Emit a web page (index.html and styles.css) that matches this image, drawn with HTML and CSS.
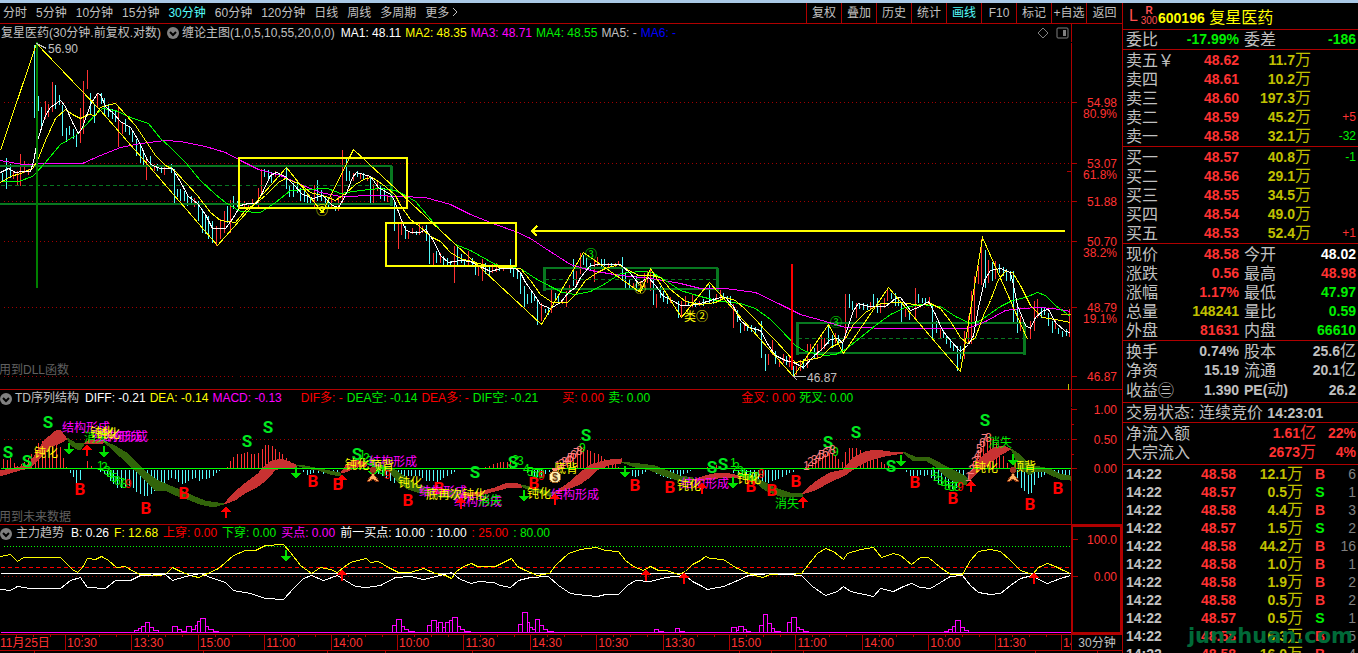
FILE: index.html
```html
<!DOCTYPE html>
<html lang="zh-CN">
<head>
    <meta charset="UTF-8">
    <meta name="viewport" content="width=device-width, initial-scale=1.0">
    <title>复星医药 600196</title>
    <link rel="stylesheet" href="styles.css">
</head>
<body>
    <div class="app">
        <main class="charts">
            <header class="toolbar">
                <nav class="periods">
                    <a href="#">分时</a>
                    <a href="#">5分钟</a>
                    <a href="#">10分钟</a>
                    <a href="#">15分钟</a>
                    <a href="#" class="active">30分钟</a>
                    <a href="#">60分钟</a>
                    <a href="#">120分钟</a>
                    <a href="#">日线</a>
                    <a href="#">周线</a>
                    <a href="#">多周期</a>
                    <a href="#">更多<svg class="more" viewBox="0 0 8 10"><path d="M2 1L6 5L2 9"/></svg></a>
                </nav>
                <div class="tools">
                    <button type="button">复权</button>
                    <button type="button">叠加</button>
                    <button type="button">历史</button>
                    <button type="button">统计</button>
                    <button type="button" class="active">画线</button>
                    <button type="button">F10</button>
                    <button type="button">标记</button>
                    <button type="button">+自选</button>
                    <button type="button">返回</button>
                </div>
            </header>

            <!-- K line -->
            <section class="pane">
                <div class="legend legend-main">
                    <span>复星医药(30分钟.前复权.对数)</span>
                    <svg class="fold" viewBox="0 0 12 12"><circle cx="6" cy="6" r="6"/><path d="M3 5L6 8L9 5"/></svg>
                    <span class="name">缠论主图(1,0,5,10,55,20,0,0)</span>
                    <span class="white">MA1: 48.11</span>
                    <span class="yellow">MA2: 48.35</span>
                    <span class="magenta">MA3: 48.71</span>
                    <span class="green">MA4: 48.55</span>
                    <span>MA5: -</span>
                    <span class="blue">MA6: -</span>
                    <svg class="pane-icons" viewBox="0 0 32 12"><path d="M6 1L11 6L6 11L1 6Z"/><rect x="20" y="1" width="11" height="10" rx="1"/><path class="fill" d="M26 3h3v6h-3z"/></svg>
                </div>
                <svg class="plot" viewBox="0 42 1122 347">
                    <path class="grid" d="M3 102H1071M3 163H1071M3 201H1071M3 241H1071M3 307H1071M3 376H1071"/>

                    <path class="bar up" d="M13 170V178M17 170V184M20 153V185M24 160V172M28 168V174M45 100V118M48 103V116M52 81V111M80 107V142M83 80V133M87 69V88M97 92V107M118 107V146M122 122V133M146 158V179M154 163V170M164 164V174M194 197V206M216 225V245M220 218V238M224 210V232M230 199V232M244 200V208M248 202V208M252 198V206M258 187V206M261 168V195M275 170V176M314 184V206M331 196V208M338 195V210M342 149V203M353 172V180M360 173V178M367 174V180M373 183V203M377 180V190M387 195V201M398 221V248M401 220V234M408 231V238M412 227V233M419 221V234M422 225V232M433 252V264M440 252V262M454 245V282M468 250V265M478 265V275M482 258V280M492 263V272M496 262V271M503 265V270M541 302V320M551 289V312M562 298V303M566 290V306M569 284V293M576 270V284M580 252V273M594 258V281M597 256V265M608 262V267M615 262V266M618 260V264M633 282V288M640 280V290M644 272V287M647 270V282M650 266V290M656 293V307M670 296V302M681 300V317M685 295V305M692 293V306M699 300V305M716 293V300M720 289V300M733 303V327M744 323V330M768 353V364M772 339V354M779 358V366M783 353V362M789 356V366M796 365V374M800 359V370M807 343V367M810 343V352M817 343V358M821 335V350M824 337V348M835 332V342M845 293V338M856 302V317M870 301V308M880 303V312M884 297V307M887 288V300M905 308V316M915 287V317M929 296V304M940 327V337M964 330V358M968 315V342M971 290V343M974 275V320M978 265V283M981 238V284M988 259V282M995 260V278M1020 315V330M1030 320V338M1034 300V330M1037 298V317M1055 318V328M1069 308V336"/>
                    <path class="bar down" d="M2 172V181M6 157V188M10 163V177M34 44V117M38 95V110M41 106V126M55 84V108M59 94V104M62 104V135M66 127V141M69 125V134M73 128V138M76 133V146M90 92V113M94 104V122M101 92V103M104 97V114M108 103V116M112 108V118M115 110V121M125 118V131M129 125V134M132 130V141M136 138V155M140 144V162M143 150V165M150 155V165M157 163V170M161 165V172M171 163V172M174 168V203M177 188V196M180 188V200M184 190V200M187 193V205M191 195V203M198 200V220M202 208V232M205 214V233M208 215V238M212 220V242M227 205V222M233 195V208M237 200V206M264 168V176M268 169V178M271 171V182M279 172V176M286 167V188M289 184V196M293 182V196M297 180V192M300 187V200M304 189V201M307 193V203M310 196V204M317 179V200M321 189V200M325 195V206M328 196V207M335 205V210M346 158V180M349 170V180M357 170V176M363 172V178M370 176V203M380 185V198M384 187V200M394 200V230M405 225V238M416 230V234M426 224V240M429 235V263M436 250V262M443 255V264M447 257V264M450 260V266M457 246V265M461 253V262M464 258V266M472 257V266M475 262V274M485 262V273M489 265V274M499 264V270M510 258V272M513 266V276M517 270V278M520 272V293M524 285V306M527 293V303M531 291V302M534 294V300M537 300V324M545 308V312M548 306V314M555 292V300M558 294V301M573 258V285M583 254V264M586 257V268M590 262V270M601 258V266M604 258V265M611 262V267M622 256V280M625 272V288M629 278V288M636 275V290M653 272V304M660 285V297M663 290V301M667 294V303M678 300V317M688 300V305M695 301V306M703 298V305M709 284V302M713 297V303M723 292V298M727 295V300M730 295V304M737 309V321M740 322V332M747 323V330M751 324V331M755 326V332M761 320V357M765 353V370M775 350V363M786 355V364M793 365V375M803 358V368M814 347V358M828 325V343M832 334V347M838 334V342M842 342V350M849 293V307M852 300V309M859 302V308M863 302V309M867 303V309M873 293V306M877 297V312M891 292V298M895 292V305M898 298V305M901 302V322M909 311V319M918 293V302M922 297V302M925 297V303M932 304V338M936 320V332M943 329V337M946 334V343M950 338V347M953 344V350M957 345V370M960 345V358M985 249V287M992 261V280M999 263V272M1003 266V275M1006 268V280M1010 270V280M1013 270V321M1017 305V332M1024 325V335M1041 307V317M1044 306V314M1048 312V325M1052 320V332M1058 327V333M1062 330V336M1066 328V335"/>

                    <path class="zone" d="M0 166H391V204H0M544 268H717V289H544ZM797 323H1024V353H797Z"/>
                    <path class="zone-mid" d="M0 185H391M544 279H717M797 338H1024"/>
                    <path class="zone-side" d="M391 165V205M544 267V290M717 267V290M797 322V354M1024 322V354"/>

                    <polyline class="line magenta-line" points="0,160 22,164 50,163 82,163 100,155 120,147 140,143 165,140 180,141 205,146 225,152 240,160 258,169 280,175 300,184 320,192 340,196 375,195 425,197 450,204 470,214 495,224 515,231 530,238 545,248 570,264 590,270 620,275 650,278 680,283 700,288 725,288 755,292 780,304 800,314 825,321 845,327 900,328 967,328 985,321 1005,310 1020,308 1040,307 1060,309 1070,311"/>
                    <polyline class="line green-line" points="0,181 18,181 32,176 45,162 60,144 75,135 85,125 95,114 102,108 115,110 130,117 148,123 160,138 170,147 185,162 200,180 215,194 225,202 240,211 260,212 275,202 290,190 305,189 327,188 340,193 360,190 380,188 395,190 405,195 415,201 427,215 440,230 455,244 470,250 495,264 510,267 520,268 535,278 550,286 562,292 575,294 590,291 605,283 620,273 640,271 652,272 665,280 680,290 700,296 720,301 740,303 755,308 770,319 780,329 795,345 805,351 825,355 835,354 845,349 860,337 875,325 890,314 905,307 920,304 940,306 955,316 970,323 980,320 1000,306 1012,300 1025,297 1037,292 1045,295 1055,305 1070,316"/>
                    <polyline class="line yellow-line" points="0,182 10,176 20,173 32,168 37,160 45,140 55,118 65,109 72,114 80,118 88,114 95,115 100,107 110,104 115,103 125,114 135,125 145,140 155,155 165,165 173,169 185,182 197,195 210,212 220,220 235,222 245,210 255,203 265,195 278,182 285,178 300,184 310,192 325,196 335,200 345,193 355,184 365,178 372,177 385,186 395,195 400,205 410,219 418,225 430,236 440,241 450,252 460,258 475,262 490,266 505,267 520,268 530,280 540,294 552,302 567,302 575,294 585,280 597,272 605,268 618,264 625,268 638,275 650,275 660,277 670,289 685,301 700,304 715,302 725,297 735,300 745,309 755,319 765,330 775,340 785,351 795,362 810,359 820,357 830,347 838,343 845,338 853,324 865,312 880,303 900,302 920,305 930,303 940,308 950,321 960,337 967,343 975,337 983,315 990,300 998,279 1005,271 1012,272 1020,285 1030,305 1042,317 1055,319 1070,322"/>
                    <polyline class="line white-line" points="0,172 8,168 15,172 22,171 30,171 33,161 37,140 45,115 50,107 60,100 65,106 72,122 78,133 82,127 90,104 97,93 100,94 105,106 113,113 120,121 130,127 138,140 147,160 152,165 160,168 172,168 178,178 188,196 197,203 205,214 212,228 225,228 233,217 240,205 248,203 256,203 262,192 270,175 276,172 285,176 293,184 302,194 313,198 322,195 332,205 338,207 345,195 352,177 356,172 370,176 378,187 390,194 394,200 400,217 405,229 410,232 420,232 425,229 433,240 440,255 448,262 460,260 470,261 480,266 490,271 500,268 515,268 520,272 525,282 533,293 540,304 550,308 560,302 568,292 575,287 580,277 590,265 600,264 620,264 630,273 638,283 648,277 655,285 663,296 672,300 680,305 690,305 700,303 710,300 720,297 725,297 733,306 740,320 748,327 760,330 768,345 775,355 785,360 793,362 803,367 812,357 822,348 830,339 838,338 842,343 848,325 853,310 858,303 868,306 885,306 895,298 900,297 910,310 920,306 928,301 935,314 942,330 950,340 960,351 968,344 973,335 978,307 984,280 990,270 1000,268 1010,272 1013,285 1017,305 1025,325 1030,328 1035,317 1043,310 1048,309 1055,322 1065,331 1070,332"/>
                    <polyline class="line yellow-line" points="0,150 36,43 100,110 148,165 217,245 286,167 322,212 353,149 541,324 583,252 640,292 650,268 681,317 709,282 793,376 828,324 843,353 888,287 960,371 982,237 1027,339"/>

                    <!-- drawn by hand on the chart -->
                    <path class="mark-green" d="M37 42V288"/>
                    <path class="mark-red" d="M792 264V370"/>
                    <path class="mark-yellow" d="M239 158H407V208H239ZM386 223H516V266H386ZM531 231H1065M537 226L532 231L537 236"/>
                    <path class="grey-line" d="M36 43L46 48M793 376H805M793 376L797 380"/>
                    <path class="tick-yellow" d="M1060 314H1070M1068 383V389"/>

                    <text class="grey" x="48" y="53">56.90</text>
                    <text class="grey" x="807" y="382">46.87</text>
                    <text class="dim" x="-1" y="374">用到DLL函数</text>
                    <text class="yellow" x="316" y="215">②</text>
                    <text class="green" x="585" y="259">③</text>
                    <text class="yellow" x="634" y="293">②</text>
                    <text class="yellow" x="684" y="321">类②</text>
                    <text class="green" x="830" y="327">③</text>

                    <path class="axis" d="M1071 42V389M1071 102H1076M1071 163H1076M1071 201H1076M1071 241H1076M1071 307H1076M1071 376H1076M1066 171H1071"/>
                    <g class="scale">
                        <text x="1117" y="107">54.98</text>
                        <text x="1117" y="118">80.9%</text>
                        <text x="1117" y="168">53.07</text>
                        <text x="1117" y="179">61.8%</text>
                        <text x="1117" y="206">51.88</text>
                        <text x="1117" y="246">50.70</text>
                        <text x="1117" y="257">38.2%</text>
                        <text x="1117" y="312">48.79</text>
                        <text x="1117" y="323">19.1%</text>
                        <text x="1117" y="381">46.87</text>
                    </g>
                </svg>
            </section>

            <!-- TD -->
            <section class="pane">
                <div class="legend legend-td">
                    <svg class="fold" viewBox="0 0 12 12"><circle cx="6" cy="6" r="6"/><path d="M3 5L6 8L9 5"/></svg>
                    <span class="name">TD序列结构</span>
                    <span class="white">DIFF: -0.21</span>
                    <span class="yellow">DEA: -0.14</span>
                    <span class="magenta">MACD: -0.13</span>
                    <span class="red gap-s">DIF多: -</span>
                    <span class="green">DEA空: -0.14</span>
                    <span class="red">DEA多: -</span>
                    <span class="green">DIF空: -0.21</span>
                    <span class="red gap-m">买: 0.00</span>
                    <span class="green">卖: 0.00</span>
                    <span class="red gap-l">金叉: 0.00</span>
                    <span class="green">死叉: 0.00</span>
                </div>
                <svg class="plot" viewBox="0 407 1122 117">
                    <defs>
                        <path id="arrow-up" d="M0 0L5 6H1V12H-1V6H-5Z"/>
                        <path id="arrow-down" d="M0 12L5 6H1V0H-1V6H-5Z"/>
                        <g id="star">
                            <circle cx="0" cy="-4" r="3" fill="#a03020"/>
                            <path fill="#ffb060" stroke="#803010" d="M0 -2L2 2L6 7L4 8L0 5L-4 8L-6 7L-2 2Z"/>
                        </g>
                    </defs>
                    <path class="grid" d="M3 439H1071"/>
                    <path class="bar up" d="M3 468V458M7 468V459M10 468V457M14 468V462M17 468V465M21 468V463M24 468V461M28 468V457M31 468V453M35 468V448M38 468V442M42 468V440M45 468V438M49 468V436M52 468V436M56 468V440M60 468V446M63 468V457M66 468V466M87 468V460M91 468V465M227 468V466M230 468V460M233 468V456M237 468V453M241 468V453M244 468V452M247 468V451M251 468V453M254 468V453M258 468V452M262 468V448M265 468V444M268 468V444M272 468V445M275 468V448M279 468V451M282 468V453M286 468V457M289 468V460M293 468V463M296 468V467M345 468V464M349 468V462M353 468V461M357 468V463M361 468V465M472 468V467M475 468V466M482 468V467M485 468V466M489 468V465M493 468V463M497 468V462M500 468V461M503 468V461M507 468V461M510 468V460M553 468V467M557 468V465M560 468V462M563 468V458M567 468V456M570 468V454M573 468V452M577 468V450M580 468V448M583 468V448M587 468V449M590 468V450M594 468V452M598 468V453M601 468V455M604 468V458M608 468V460M612 468V462M615 468V463M618 468V466M703 468V467M707 468V466M712 468V465M716 468V464M805 468V466M808 468V464M812 468V462M815 468V460M818 468V458M822 468V455M825 468V453M829 468V452M832 468V452M835 468V454M838 468V458M842 468V461M845 468V451M849 468V447M852 468V447M856 468V447M860 468V449M863 468V451M867 468V453M870 468V455M873 468V457M877 468V458M881 468V461M884 468V463M888 468V465M970 468V465M973 468V460M977 468V453M980 468V447M983 468V441M987 468V437M990 468V437M993 468V438M996 468V442M999 468V447M1003 468V455M1007 468V462"/>
                    <path class="bar down" d="M70 469V472M73 469V476M76 469V482M80 469V479M100 469V471M104 469V473M107 469V475M110 469V480M113 469V483M117 469V487M121 469V487M125 469V486M129 469V485M133 469V487M136 469V491M140 469V493M144 469V495M147 469V495M151 469V493M154 469V490M157 469V487M161 469V485M164 469V482M168 469V479M171 469V477M175 469V478M178 469V481M182 469V483M185 469V482M188 469V480M192 469V478M195 469V477M199 469V480M202 469V478M206 469V478M209 469V477M213 469V475M216 469V472M219 469V470M303 469V471M307 469V474M310 469V473M313 469V472M318 469V472M323 469V473M328 469V472M333 469V472M337 469V472M378 469V473M382 469V475M386 469V477M390 469V480M394 469V482M398 469V480M401 469V478M404 469V477M408 469V475M411 469V475M415 469V475M419 469V475M422 469V477M426 469V480M429 469V480M433 469V480M437 469V481M440 469V479M443 469V477M447 469V475M451 469V473M454 469V471M527 469V472M531 469V475M534 469V476M537 469V476M541 469V476M545 469V473M549 469V471M625 469V471M632 469V475M635 469V476M638 469V475M642 469V473M645 469V471M652 469V471M656 469V473M660 469V475M663 469V476M667 469V477M670 469V478M673 469V478M677 469V477M680 469V475M683 469V473M687 469V472M690 469V470M733 469V472M738 469V474M742 469V476M746 469V477M750 469V477M754 469V478M758 469V479M762 469V481M765 469V482M768 469V482M772 469V480M775 469V479M778 469V478M782 469V476M786 469V474M789 469V472M793 469V471M906 469V471M910 469V475M913 469V476M917 469V475M920 469V474M924 469V475M927 469V474M931 469V477M934 469V480M938 469V482M941 469V483M945 469V485M948 469V487M952 469V488M956 469V487M959 469V483M963 469V480M1013 469V475M1017 469V480M1021 469V487M1024 469V490M1028 469V493M1031 469V492M1034 469V484M1038 469V477M1041 469V476M1044 469V474M1048 469V473M1051 469V472M1054 469V473M1058 469V475M1062 469V476M1065 469V475M1069 469V475"/>
                    <path class="ribbon-up" d="M0 471L20 467L30 464L35 455L45 440L57 430L60 430L67 439L60 443L50 447L40 458L30 468L20 470L0 476ZM84 444L88 441L104 440L103 443L95 443ZM224 504L235 492L247 482L258 474L265 466L272 461L282 459L296 465L296 467L285 467L275 470L266 480L257 487L245 493L235 500ZM341 473L348 463L356 460L366 463L366 466L356 467L348 471ZM461 494L480 492L495 488L505 484L515 483L521 485L521 487L510 487L495 491L480 495L461 497ZM556 492L570 482L580 473L590 465L600 462L610 460L621 459L621 463L608 465L597 470L590 477L580 484L570 488L556 493ZM693 480L705 476L718 473L730 474L740 476L740 478L725 477L705 480ZM802 494L815 482L830 473L843 470L853 458L865 452L875 450L890 452L903 452L903 453L885 456L870 460L858 466L845 475L830 482L815 490ZM968 478L975 465L983 456L993 448L1003 446L1011 449L1000 455L990 463L980 470L970 480Z"/>
                    <path class="ribbon-down" d="M67 438L75 443L84 444L80 450L77 449L71 445ZM103 441L115 446L128 454L137 463L147 473L157 480L170 486L180 490L195 497L205 501L224 504L213 507L200 504L185 498L175 495L167 491L155 490L147 482L138 473L125 461L110 447ZM296 465L305 466L315 468L325 470L340 473L340 476L330 474L318 470L305 468ZM366 463L385 466L395 470L405 477L415 484L425 487L440 490L460 491L460 497L440 497L420 493L408 489L398 482L390 472ZM521 485L535 488L550 492L556 493L550 496L540 493L525 488ZM621 462L630 463L640 464L655 466L668 471L680 476L693 478L693 481L680 481L665 476L650 470L635 467ZM738 475L750 476L760 480L775 488L790 493L802 494L802 496L780 496L765 490L755 482ZM903 452L915 457L930 458L945 466L955 471L965 476L968 479L966 485L955 482L945 476L935 466L925 460L912 460ZM1011 449L1020 455L1028 463L1035 466L1050 469L1060 474L1070 476L1070 480L1060 479L1045 472L1035 471L1030 475L1020 468Z"/>
                    <path class="line green-line" d="M0 468H1071"/>

                    <g class="sell">
                        <text x="8" y="458">S</text><text x="27" y="467">S</text><text x="48" y="428">S</text>
                        <text x="247" y="447">S</text><text x="268" y="433">S</text><text x="357" y="460">S</text>
                        <text x="475" y="478">S</text><text x="513" y="468">S</text><text x="586" y="441">S</text>
                        <text x="712" y="473">S</text><text x="723" y="470">S</text><text x="828" y="448">S</text>
                        <text x="856" y="438">S</text><text x="891" y="472">S</text><text x="985" y="426">S</text>
                    </g>
                    <g class="buy">
                        <text x="80" y="495">B</text><text x="146" y="514">B</text><text x="184" y="499">B</text>
                        <text x="313" y="487">B</text><text x="338" y="490">B</text><text x="408" y="506">B</text>
                        <text x="439" y="494">B</text><text x="534" y="489">B</text><text x="635" y="491">B</text>
                        <text x="670" y="493">B</text><text x="751" y="492">B</text><text x="772" y="496">B</text>
                        <text x="796" y="487">B</text><text x="915" y="488">B</text><text x="953" y="504">B</text>
                        <text x="1030" y="510">B</text><text x="1058" y="494">B</text>
                    </g>

                    <!-- TD counts -->
                    <g class="green">
                        <text x="97" y="470">1</text><text x="101" y="471">2</text><text x="104" y="475">3</text><text x="107" y="479">4</text><text x="111" y="482">5</text><text x="114" y="485">6</text><text x="118" y="487">7</text><text x="121" y="488">8</text>
                        <text x="359" y="459">1</text><text x="363" y="462">2</text><text x="366" y="465">3</text><text x="370" y="468">4</text><text x="374" y="471">5</text><text x="378" y="474">6</text><text x="381" y="476">7</text>
                        <text x="512" y="464">2</text><text x="517" y="465">3</text><text x="523" y="473">4</text><text x="527" y="476">5</text><text x="531" y="477">6</text><text x="534" y="478">7</text><text x="538" y="478">8</text>
                        <text x="579" y="452">9</text>
                        <text x="730" y="467">1</text><text x="733" y="471">2</text><text x="737" y="475">3</text><text x="740" y="478">4</text><text x="744" y="480">5</text><text x="748" y="481">6</text><text x="752" y="481">7</text>
                        <text x="832" y="456">9</text>
                        <text x="930" y="476">1</text><text x="933" y="481">2</text><text x="937" y="485">3</text><text x="941" y="488">4</text><text x="944" y="490">5</text><text x="948" y="491">6</text><text x="951" y="491">7</text><text x="954" y="491">8</text>
                    </g>
                    <g class="pink">
                        <text x="554" y="470">1</text><text x="558" y="468">2</text><text x="561" y="466">3</text><text x="564" y="464">4</text><text x="567" y="462">5</text><text x="570" y="459">6</text><text x="573" y="457">7</text><text x="576" y="455">8</text>
                        <text x="803" y="470">1</text><text x="807" y="466">2</text><text x="811" y="464">3</text><text x="815" y="461">4</text><text x="818" y="459">5</text><text x="822" y="457">6</text><text x="825" y="456">7</text><text x="829" y="454">8</text>
                        <text x="965" y="481">1</text><text x="968" y="474">2</text><text x="971" y="466">3</text><text x="974" y="459">4</text><text x="976" y="453">5</text><text x="979" y="447">6</text><text x="981" y="443">7</text><text x="985" y="442">8</text>
                    </g>
                    <g class="red">
                        <text x="125" y="488">9</text><text x="384" y="479">9</text><text x="538" y="480">9</text><text x="758" y="478">9</text><text x="957" y="491">9</text>
                    </g>

                    <g class="magenta">
                        <text x="62" y="432">结构形成</text><text x="94" y="441">结构形成</text><text x="100" y="441">结构形成</text>
                        <text x="369" y="466">结构形成</text><text x="419" y="496">结构形成</text><text x="454" y="506">结构形成</text>
                        <text x="551" y="499">结构形成</text><text x="681" y="488">结构形成</text>
                    </g>
                    <g class="green">
                        <text x="84" y="442">消失</text><text x="478" y="505">消失</text><text x="775" y="508">消失</text><text x="988" y="447">消失</text>
                    </g>
                    <g class="yellow">
                        <text x="34" y="457">钝化</text><text x="90" y="437">钝化</text><text x="96" y="438">钝化</text>
                        <text x="345" y="469">钝化</text><text x="370" y="470">顶背</text><text x="398" y="487">钝化</text>
                        <text x="426" y="499">底再次钝化</text><text x="527" y="498">钝化</text><text x="554" y="473">底背</text>
                        <text x="677" y="490">钝化</text><text x="737" y="483">钝化</text><text x="974" y="472">钝化</text>
                        <text x="1012" y="471">顶背</text>
                    </g>

                    <g class="fill-red">
                        <use href="#arrow-up" x="87" y="444"/><use href="#arrow-up" x="226" y="506"/><use href="#arrow-up" x="342" y="474"/><use href="#arrow-up" x="461" y="497"/><use href="#arrow-up" x="555" y="493"/><use href="#arrow-up" x="702" y="482"/><use href="#arrow-up" x="803" y="496"/><use href="#arrow-up" x="971" y="480"/>
                    </g>
                    <g class="fill-green">
                        <use href="#arrow-down" x="69" y="443"/><use href="#arrow-down" x="104" y="446"/><use href="#arrow-down" x="296" y="467"/><use href="#arrow-down" x="373" y="465"/><use href="#arrow-down" x="524" y="490"/><use href="#arrow-down" x="625" y="466"/><use href="#arrow-down" x="733" y="477"/><use href="#arrow-down" x="901" y="455"/><use href="#arrow-down" x="1013" y="454"/>
                    </g>
                    <use href="#star" x="373" y="474"/>
                    <use href="#star" x="1013" y="474"/>
                    <path fill="#ff9070" d="M552 468h6l-1 4h-4z"/>
                    <circle cx="555" cy="477" r="6" fill="#fff0b0" stroke="#a06020"/>
                    <text class="coin" x="555" y="481">$</text>

                    <path class="axis" d="M1071 407V524M1071 409H1076M1071 439H1076M1071 468H1076M1071 424H1073M1071 454H1073"/>
                    <g class="scale">
                        <text x="1117" y="414">1.00</text>
                        <text x="1117" y="444">0.50</text>
                        <text x="1117" y="473">0.00</text>
                    </g>
                    <text class="dim" x="-1" y="521">用到未来数据</text>
                </svg>
            </section>

            <!-- 主力趋势 -->
            <section class="pane pane-trend">
                <div class="legend">
                    <svg class="fold" viewBox="0 0 12 12"><circle cx="6" cy="6" r="6"/><path d="M3 5L6 8L9 5"/></svg>
                    <span class="name">主力趋势</span>
                    <span class="white">B: 0.26</span>
                    <span class="yellow">F: 12.68</span>
                    <span class="red">上穿: 0.00</span>
                    <span class="green">下穿: 0.00</span>
                    <span class="magenta">买点: 0.00</span>
                    <span class="white">前一买点: 10.00</span>
                    <span class="white">: 10.00</span>
                    <span class="red">: 25.00</span>
                    <span class="green">: 80.00</span>
                </div>
                <svg class="plot" viewBox="0 542 1122 92">
                    <path class="level-green" d="M3 546H1070"/>
                    <path class="level-red" d="M0 567H1070"/>
                    <path class="grid" d="M3 576H1071"/>
                    <path class="line white-line" d="M0 573H1070"/>
                    <polyline class="line yellow-line" points="0,556 10,554 17,561 23,557 60,557 65,562 72,569 77,572 82,567 87,558 95,559 101,556 108,560 116,567 125,566 133,571 140,574 160,575 166,573 172,567 180,571 190,575 198,577 205,574 218,568 225,562 233,555 245,550 255,550 265,545 283,544 290,552 300,565 311,573 320,567 330,569 337,572 343,567 350,562 357,560 366,558 370,562 378,561 388,567 398,572 410,572 423,568 435,573 445,575 451,578 456,571 463,566 471,563 477,566 495,566 503,562 511,558 517,566 525,570 537,575 549,573 555,565 568,553 580,549 596,547 605,550 618,551 625,560 633,566 643,570 650,566 658,570 666,570 678,574 685,571 692,564 700,560 705,556 710,558 723,559 735,567 748,573 762,577 770,574 790,574 801,573 808,564 817,553 825,548 833,551 843,559 847,553 860,549 873,547 881,557 893,553 900,555 911,564 920,557 928,557 940,567 950,574 962,574 970,560 978,551 990,549 1000,551 1010,560 1020,570 1032,574 1038,567 1047,563 1055,566 1063,570 1070,573"/>
                    <polyline class="line white-line" points="0,589 10,590 17,586 30,588 60,588 70,580 80,577 87,587 105,588 115,580 130,580 140,575 165,574 172,580 185,576 200,573 210,577 225,582 233,590 250,593 265,598 283,599 293,588 303,578 311,575 323,580 337,575 345,580 355,586 366,587 380,585 395,577 410,576 423,579 440,575 451,572 460,579 471,583 478,581 493,582 500,585 510,587 518,580 530,577 548,576 558,585 570,593 585,595 597,596 605,594 618,594 627,585 635,580 650,581 665,577 685,575 692,581 700,585 707,589 723,586 735,581 748,575 770,573 801,575 812,586 825,595 837,591 843,586 850,591 873,596 880,588 893,591 903,586 911,583 920,587 930,588 940,582 950,576 962,575 970,585 978,592 990,594 1000,593 1010,585 1020,578 1032,575 1040,580 1047,583 1060,578 1070,575"/>
                    <path class="line magenta-line" d="M0 632H1071M134 632V630H138V628H141V626H145V622H149V627H153V630H158V631M141 632V626M145 632V622M149 632V627M172 632V626H177V629H181V631H186V626H191V629H195V625H197V621H200V618H205V626H208V629H213V631H218M177 632V626M191 632V626M197 632V621M200 632V618M205 632V618M392 632V625H396V619H401V626H404V629H408V631H414M396 632V619M401 632V619M427 632V625H431V620H436V627H438V622H442V627H445V622H449V620H452V617H457V626H460V629H464V631H470M431 632V620M436 632V620M438 632V622M442 632V622M445 632V622M449 632V620M452 632V617M457 632V617M518 632V624H522V612H527V622H529V627H532V629H535V619H539V625H543V629H547V631H553M522 632V612M527 632V612M529 632V622M535 632V619M539 632V619M654 632V629H658V631H663M675 632V628H679V631H684M731 632V627H736V630H738V626H743V629H746V631H750M736 632V627M743 632V626M759 632V625H763V614H767V623H771V628H774V631H780M763 632V614M767 632V614M771 632V623M787 632V622H791V617H796V627H799V629H803V631H808M791 632V617M796 632V617M944 632V631H948V629H952V626H955V620H960V627H964V630H968V631M952 632V626M955 632V620M960 632V620"/>
                    <g class="fill-red">
                        <use href="#arrow-up" x="342" y="569"/><use href="#arrow-up" x="646" y="569"/><use href="#arrow-up" x="684" y="572"/><use href="#arrow-up" x="1034" y="572"/>
                    </g>
                    <g class="fill-green"><use href="#arrow-down" x="286" y="550"/></g>
                    <path class="axis-bold" d="M1072 634V526H1121V633H1072"/>
                    <path class="axis" d="M1072 539H1077M1072 576H1077"/>
                    <g class="scale">
                        <text x="1117" y="544">100.0</text>
                        <text x="1117" y="581">0.00</text>
                    </g>
                </svg>
            </section>

            <footer class="time-axis">
                <ol class="times">
                    <li class="first">11月25日</li>
                    <li>10:30</li>
                    <li>13:30</li>
                    <li>15:00</li>
                    <li>11:00</li>
                    <li>14:00</li>
                    <li>10:00</li>
                    <li>11:30</li>
                    <li>14:30</li>
                    <li>10:30</li>
                    <li>13:30</li>
                    <li>15:00</li>
                    <li>11:00</li>
                    <li>14:00</li>
                    <li>10:00</li>
                    <li>11:30</li>
                    <li class="last">14:30</li>
                </ol>
                <span class="period">30分钟</span>
            </footer>
            <svg class="ruler" viewBox="0 0 1122 2"><path d="M34 0V2M203 0V2M327 0V2M385 0V2M472 0V2M739 0V2M771 0V2M803 0V2M1035 0V2M1097 0V2"/></svg>
        </main>

        <aside class="quote">
            <header class="stock">
                <span class="tag-l">L</span>
                <span class="tag-r"><b>R</b>300</span>
                <h1><b>600196</b> 复星医药</h1>
            </header>

            <table class="info single">
                <tr><th>委比</th><td class="green">-17.99%</td><th>委差</th><td class="green">-186</td></tr>
            </table>

            <table class="book">
                <tr><th>卖五￥</th><td>48.62</td><td class="vol">11.7<i>万</i></td><td class="diff"></td></tr>
                <tr><th>卖四</th><td>48.61</td><td class="vol">10.2<i>万</i></td><td class="diff"></td></tr>
                <tr><th>卖三</th><td>48.60</td><td class="vol">197.3<i>万</i></td><td class="diff"></td></tr>
                <tr><th>卖二</th><td>48.59</td><td class="vol">45.2<i>万</i></td><td class="diff">+5</td></tr>
                <tr><th>卖一</th><td>48.58</td><td class="vol">32.1<i>万</i></td><td class="diff green">-32</td></tr>
            </table>
            <table class="book">
                <tr><th>买一</th><td>48.57</td><td class="vol">40.8<i>万</i></td><td class="diff green">-1</td></tr>
                <tr><th>买二</th><td>48.56</td><td class="vol">29.1<i>万</i></td><td class="diff"></td></tr>
                <tr><th>买三</th><td>48.55</td><td class="vol">34.5<i>万</i></td><td class="diff"></td></tr>
                <tr><th>买四</th><td>48.54</td><td class="vol">49.0<i>万</i></td><td class="diff"></td></tr>
                <tr><th>买五</th><td>48.53</td><td class="vol">52.4<i>万</i></td><td class="diff">+1</td></tr>
            </table>

            <table class="info">
                <tr><th>现价</th><td>48.58</td><th>今开</th><td class="white">48.02</td></tr>
                <tr><th>涨跌</th><td>0.56</td><th>最高</th><td>48.98</td></tr>
                <tr><th>涨幅</th><td>1.17%</td><th>最低</th><td class="green">47.97</td></tr>
                <tr><th>总量</th><td class="vol">148241</td><th>量比</th><td class="green">0.59</td></tr>
                <tr><th>外盘</th><td>81631</td><th>内盘</th><td class="green">66610</td></tr>
            </table>
            <table class="info basics">
                <tr><th>换手</th><td>0.74%</td><th>股本</th><td>25.6<i>亿</i></td></tr>
                <tr><th>净资</th><td>15.19</td><th>流通</th><td>20.1<i>亿</i></td></tr>
                <tr><th>收益㊂</th><td>1.390</td><th><b>PE(</b>动<b>)</b></th><td>26.2</td></tr>
            </table>

            <p class="status">交易状态: 连续竞价 <b>14:23:01</b></p>

            <table class="flow">
                <tr><th>净流入额</th><td>1.61<i>亿</i></td><td>22%</td></tr>
                <tr><th>大宗流入</th><td>2673<i>万</i></td><td>4%</td></tr>
            </table>

            <table class="deals">
                <tr><th>14:22</th><td>48.58</td><td class="vol">12.1<i>万</i></td><td class="side">B</td><td class="count">6</td></tr>
                <tr><th>14:22</th><td>48.57</td><td class="vol">0.5<i>万</i></td><td class="side green">S</td><td class="count">1</td></tr>
                <tr><th>14:22</th><td>48.58</td><td class="vol">4.4<i>万</i></td><td class="side">B</td><td class="count">3</td></tr>
                <tr><th>14:22</th><td>48.57</td><td class="vol">1.5<i>万</i></td><td class="side green">S</td><td class="count">2</td></tr>
                <tr><th>14:22</th><td>48.58</td><td class="vol">44.2<i>万</i></td><td class="side">B</td><td class="count">16</td></tr>
                <tr><th>14:22</th><td>48.58</td><td class="vol">1.0<i>万</i></td><td class="side">B</td><td class="count">1</td></tr>
                <tr><th>14:22</th><td>48.58</td><td class="vol">1.9<i>万</i></td><td class="side">B</td><td class="count">2</td></tr>
                <tr><th>14:22</th><td>48.58</td><td class="vol">0.5<i>万</i></td><td class="side">B</td><td class="count">2</td></tr>
                <tr><th>14:22</th><td>48.57</td><td class="vol">0.5<i>万</i></td><td class="side green">S</td><td class="count">1</td></tr>
                <tr><th>14:22</th><td>48.58</td><td class="vol">6.3<i>万</i></td><td class="side">B</td><td class="count">5</td></tr>
                <tr><th>14:22</th><td>48.58</td><td class="vol">16.0<i>万</i></td><td class="side">B</td><td class="count">4</td></tr>
            </table>
        </aside>
        <div class="watermark">junzhuan.com</div>
    </div>
</body>
</html>
```
FILE: styles.css
```css
* {
    box-sizing: border-box;
}

body {
    margin: 0;
    background-color: #000;
    color: #c0c0c0;
    font-family: "Liberation Sans", "Noto Sans CJK SC", sans-serif;
    font-size: 12px;
}

.app {
    position: relative;
    display: flex;
    height: 100vh;
    overflow: hidden;
    border-top: 3px solid #a9c8e6;
}

.charts {
    flex: 1;
    min-width: 0;
}

/* Colours */
.white { color: #fff; fill: #fff; }
.yellow { color: #ff0; fill: #ff0; }
.magenta { color: #f0f; fill: #f0f; }
.green { color: #00f000; fill: #00f000; }
.red { color: #f00; fill: #f00; }
.blue { color: #00f; }
.pink { fill: #ff8080; }
.grey { fill: #c0c0c0; }
.dim { fill: #606060; }

/* Toolbar */
.toolbar {
    display: flex;
    justify-content: space-between;
    height: 21px;
    border-bottom: 1px solid #b00000;
    line-height: 20px;
}

.periods {
    display: flex;
    gap: 9px;
    padding-left: 3px;
    white-space: nowrap;
}

.periods a {
    color: #c0c0c0;
    text-decoration: none;
}

.periods .active,
.tools .active {
    color: #54fcfc;
}

.more {
    width: 8px;
    height: 10px;
    margin-left: 2px;
    fill: none;
    stroke: #c0c0c0;
}

.tools {
    display: flex;
}

.tools button {
    width: 35px;
    padding: 0;
    border: none;
    border-left: 1px solid #b00000;
    background: none;
    color: #c0c0c0;
    font: inherit;
    white-space: nowrap;
    cursor: pointer;
}

.tools button:last-child {
    width: 36px;
}

/* Panes */
.pane {
    border-bottom: 1px solid #b00000;
}

.legend {
    display: flex;
    align-items: center;
    gap: 5px;
    height: 17px;
    margin-right: 50px;
    border-right: 1px solid #b00000;
    line-height: 17px;
    white-space: nowrap;
}

.legend-main {
    height: 18px;
    padding-left: 1px;
    gap: 4px;
}

.legend-td {
    gap: 4px;
}

.legend .fold {
    margin-right: -1px;
}

.legend .name {
    margin-right: 2px;
}

.legend-main .fold {
    margin-left: 2px;
}

.gap-s {
    margin-left: 15px;
}

.gap-m {
    margin-left: 20px;
}

.gap-l {
    margin-left: 87px;
}

.fold {
    width: 12px;
    height: 12px;
    fill: #808080;
}

.fold path {
    fill: none;
    stroke: #000;
    stroke-width: 2;
}

.pane-icons {
    width: 32px;
    height: 12px;
    margin-left: auto;
    margin-right: 2px;
    fill: none;
    stroke: #808080;
}

.pane-icons .fill {
    fill: #808080;
    stroke: none;
}

.plot {
    display: block;
    width: 100%;
    overflow: visible;
    shape-rendering: crispEdges;
}

.plot path,
.plot polyline {
    stroke-width: 1;
}

.grid,
.bar,
.line,
.zone-mid,
.axis,
.level-green,
.level-red,
.zone,
.zone-side,
.axis-bold,
.grey-line,
.tick-yellow {
    fill: none;
}

/* put the thin strokes on whole pixels */
.grid,
.bar,
.line,
.zone-mid,
.zone-side,
.axis,
.level-green,
.level-red,
.grey-line,
.tick-yellow {
    transform: translate(0.5px, 0.5px);
}

.grid {
    stroke: #a00000;
    stroke-dasharray: 1 3;
}

.up { stroke: #ff3232; }
.down { stroke: #54fcfc; }
.white-line { stroke: #fff; }
.yellow-line { stroke: #ff0; }
.magenta-line { stroke: #f0f; }
.green-line { stroke: #0f0; }
.grey-line { stroke: #c0c0c0; }
.tick-yellow { stroke: #c0c000; }

.plot .zone {
    stroke: #087820;
    stroke-width: 2;
}

.plot .zone-side {
    stroke: #087820;
    stroke-width: 3;
}

.zone-mid {
    stroke: #087820;
    stroke-dasharray: 4 3;
}

.plot .mark-green {
    stroke: #008000;
    stroke-width: 2;
}

.plot .mark-red {
    stroke: #f00;
    stroke-width: 2;
}

.plot .mark-yellow {
    fill: none;
    stroke: #ff0;
    stroke-width: 2;
}

.level-green {
    stroke: #0f0;
    stroke-dasharray: 1 2;
}

.level-red {
    stroke: #f00;
    stroke-dasharray: 4 3;
}

.axis {
    stroke: #b00000;
}

.plot .axis-bold {
    stroke: #b00000;
    stroke-width: 2;
}

.scale {
    fill: #ff3232;
    text-anchor: end;
}

.ribbon-up {
    fill: #c83232;
    stroke: #c83232;
}

.ribbon-down {
    fill: #32640a;
    stroke: #32640a;
}

.fill-red { fill: #f00; }
.fill-green { fill: #00e000; }

.sell,
.buy {
    font-family: "Liberation Sans Narrow", Roboto, sans-serif;
    font-size: 17px;
    font-weight: bold;
    text-anchor: middle;
}

.sell { fill: #00e820; }
.buy { fill: #f00; }

.coin {
    fill: #704010;
    font-size: 10px;
    font-weight: bold;
    text-anchor: middle;
}

/* Time axis */
.time-axis {
    display: flex;
    height: 16px;
    border-bottom: 1px solid #b00000;
    line-height: 17px;
}

.times {
    display: flex;
    flex: 1;
    min-width: 0;
    margin: 0;
    padding: 0;
    list-style: none;
    color: #ff3232;
    white-space: nowrap;
    overflow: hidden;
}

.times li {
    flex: 1;
    padding-left: 1px;
    border-left: 1px solid #b00000;
    background: repeating-linear-gradient(90deg, transparent 0 16px, #b00000 16px 17px) top / 100% 2px no-repeat;
}

.times .first {
    flex: 0 0 65px;
    padding: 0;
    border: none;
}

.times .last {
    flex: 0 0 10px;
    overflow: hidden;
}

.period {
    width: 51px;
    border-left: 1px solid #b00000;
    text-align: center;
}

.ruler {
    display: block;
    width: 100%;
    stroke: #b00000;
    shape-rendering: crispEdges;
}

/* Quote panel */
.quote {
    flex: 0 0 236px;
    border-left: 1px solid #b00000;
    font-size: 16px;
}

.stock {
    display: flex;
    align-items: center;
    height: 27px;
    padding-left: 6px;
    border-bottom: 1px solid #b00000;
    color: #ff5050;
}

.tag-l {
    width: 11px;
}

.tag-r {
    display: flex;
    flex-direction: column;
    align-items: center;
    width: 18px;
    font-size: 10px;
    line-height: 10px;
}

.stock h1 {
    margin: 0;
    color: #ff0;
    font-size: 16px;
    font-weight: normal;
    white-space: nowrap;
}

.stock h1 b {
    font-size: 14px;
}

.quote table {
    width: 100%;
    table-layout: fixed;
    border-collapse: separate;
    border-spacing: 0;
}

.quote th {
    padding: 0 0 0 3px;
    font-weight: normal;
    text-align: left;
    white-space: nowrap;
}

.quote td {
    padding: 0;
    color: #ff3232;
    font-size: 14px;
    font-weight: bold;
    text-align: right;
    white-space: nowrap;
}

.quote tr {
    height: 19px;
    line-height: 19px;
}

.quote i {
    font-size: 16px;
    font-style: normal;
    font-weight: normal;
    line-height: 16px;
}

.quote td.white { color: #fff; }
.quote td.green { color: #00f000; }
.quote td.vol { color: #c0c000; }

.quote td:last-child {
    padding-right: 2px;
}

.info,
.book,
.flow {
    padding-top: 1px;
    border-bottom: 1px solid #b00000;
}

.single {
    padding-top: 0;
}

.info th { width: 58px; }
.info td { width: 58px; }
.info td + th { padding-left: 5px; }
.info td:last-child { width: auto; }
.info b { font-size: 14px; }

.basics,
.flow {
    padding-bottom: 2px;
}

.basics td {
    color: #c0c0c0;
}

.book th { width: 58px; }
.book td { width: 58px; }
.book .vol { width: 72px; }

.book .diff {
    width: auto;
    font-size: 12px;
    font-weight: normal;
}

.status {
    height: 20px;
    margin: 0;
    padding-left: 3px;
    border-bottom: 1px solid #b00000;
    line-height: 19px;
    white-space: nowrap;
}

.status b {
    font-size: 14px;
}

.flow td { width: 42px; }
.flow th { width: 115px; }
.flow th + td { width: 78px; }

.deals th {
    width: 51px;
    font-size: 14px;
    font-weight: bold;
}

.quote .deals th {
    font-weight: bold;
}

.quote .deals tr {
    height: 18px;
    line-height: 18px;
}

.deals td { width: 62px; }
.deals .vol { width: 67px; }

.quote .deals .side {
    width: 34px;
    text-align: center;
}

.quote .deals .count {
    width: auto;
    color: #808080;
    font-weight: normal;
}

.watermark {
    position: absolute;
    right: 5px;
    bottom: 5px;
    color: #006a38;
    font-family: "DejaVu Sans", sans-serif;
    font-size: 21px;
    font-weight: bold;
    line-height: 24px;
}
```
